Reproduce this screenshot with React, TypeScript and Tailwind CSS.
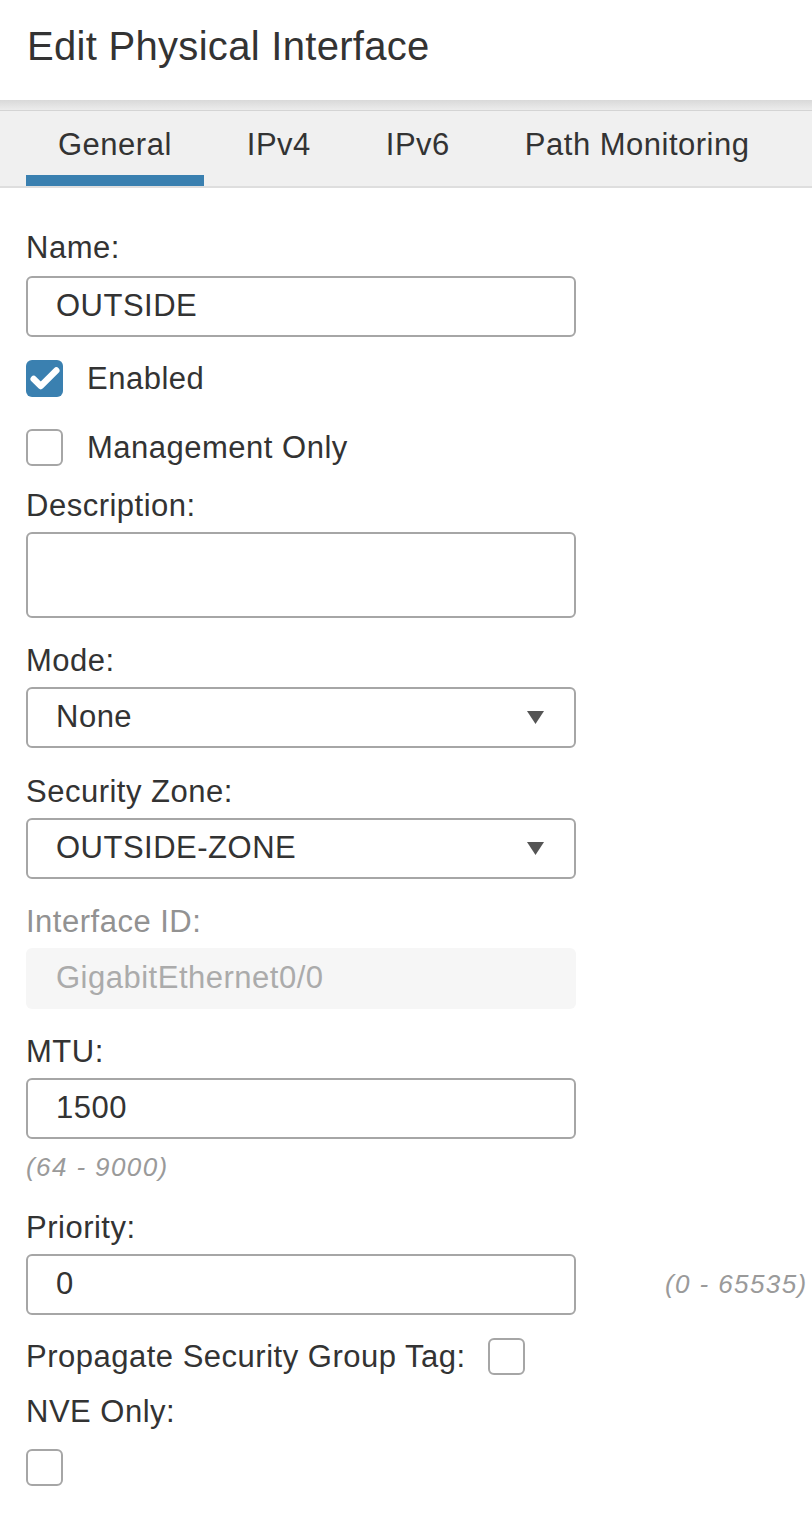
import { Check } from 'lucide-react';

const font = { fontFamily: '"Liberation Sans", Arial, sans-serif' };

function Label({ children, muted, first }: { children: React.ReactNode; muted?: boolean; first?: boolean }) {
    return (
        <div className={`h-9 leading-9 text-[31px] tracking-[0.5px] ${first ? 'mb-2.5' : 'mb-2'} ${muted ? 'text-[#929292]' : 'text-[#333]'}`}>
            {children}
        </div>
    );
}

function TextBox({ value, className = '' }: { value: string; className?: string }) {
    return (
        <div className={`w-[550px] h-[61px] shrink-0 border-2 border-[#a6a6a6] rounded-[6px] bg-white flex items-center pl-[28px] text-[31px] tracking-[0.5px] text-[#333] ${className}`}>
            {value}
        </div>
    );
}

function SelectBox({ value }: { value: string }) {
    return (
        <div className="w-[550px] h-[61px] border-2 border-[#a6a6a6] rounded-[6px] bg-white flex items-center justify-between pl-[28px] pr-[30px] text-[31px] tracking-[0.5px] text-[#333]">
            <span>{value}</span>
            <svg width="17" height="13" viewBox="0 0 17 13">
                <path d="M0 0 H17 L8.5 13 Z" fill="#555" />
            </svg>
        </div>
    );
}

function CheckBox({ checked }: { checked?: boolean }) {
    if (checked) {
        return (
            <div className="w-[37px] h-[37px] rounded-[6px] bg-[#3a80b0] flex items-center justify-center shrink-0">
                <Check className="w-[34px] h-[34px] text-white" strokeWidth={4.5} />
            </div>
        );
    }
    return <div className="w-[37px] h-[37px] rounded-[6px] border-2 border-[#a6a6a6] bg-white shrink-0" />;
}

const tabs = ['General', 'IPv4', 'IPv6', 'Path Monitoring'];

export default function App() {
    return (
        <div className="w-[812px] min-h-[1518px] bg-white" style={font}>
            {/* Header */}
            <div className="h-[100px] flex items-center px-[27px] pb-[8px]">
                <h1 className="text-[40px] tracking-[0.3px] text-[#333] font-normal leading-none">Edit Physical Interface</h1>
            </div>
            <div className="h-[11px] bg-gradient-to-b from-[#d9d9d9] to-[#ececec] border-b border-[#d4d4d4]" />

            {/* Tabs */}
            <div className="h-[77px] bg-[#f0f0f0] border-b-2 border-[#dedede] flex pl-[26px] gap-[11px]">
                {tabs.map((t, i) => (
                    <div key={t} className="relative px-[32px] flex items-center pb-[7px] text-[31px] tracking-[0.5px] text-[#333]">
                        {t}
                        {i === 0 && <div className="absolute left-0 right-0 bottom-0 h-[11px] bg-[#3a80b0]" />}
                    </div>
                ))}
            </div>

            {/* Form */}
            <div className="pl-[26px] pt-[42px]">
                <Label first>Name:</Label>
                <TextBox value="OUTSIDE" />

                <div className="flex items-center h-[37px] gap-[24px] mt-[23px]">
                    <CheckBox checked />
                    <span className="text-[31px] tracking-[0.5px] leading-none text-[#333]">Enabled</span>
                </div>
                <div className="flex items-center h-[37px] gap-[24px] mt-[32px]">
                    <CheckBox />
                    <span className="text-[31px] tracking-[0.5px] leading-none text-[#333]">Management Only</span>
                </div>

                <div className="mt-[22px]">
                    <Label>Description:</Label>
                    <div className="w-[550px] h-[86px] border-2 border-[#a6a6a6] rounded-[6px] bg-white" />
                </div>

                <div className="mt-[25px]">
                    <Label>Mode:</Label>
                    <SelectBox value="None" />
                </div>

                <div className="mt-[26px]">
                    <Label>Security Zone:</Label>
                    <SelectBox value="OUTSIDE-ZONE" />
                </div>

                <div className="mt-[25px]">
                    <Label muted>Interface ID:</Label>
                    <div className="w-[550px] h-[61px] rounded-[6px] bg-[#f6f6f6] flex items-center pl-[30px] text-[31px] tracking-[0.5px] text-[#ababab]">
                        GigabitEthernet0/0
                    </div>
                </div>

                <div className="mt-[25px]">
                    <Label>MTU:</Label>
                    <TextBox value="1500" />
                    <div className="mt-[13px] h-[30px] leading-[30px] text-[26px] tracking-[1.4px] italic text-[#9a9a9a]">(64 - 9000)</div>
                </div>

                <div className="mt-[28px]">
                    <Label>Priority:</Label>
                    <div className="flex items-center">
                        <TextBox value="0" />
                        <span className="ml-[89px] text-[26px] tracking-[1.4px] italic text-[#9a9a9a] whitespace-nowrap">(0 - 65535)</span>
                    </div>
                </div>

                <div className="flex items-center h-[37px] gap-[22px] mt-[23px]">
                    <span className="text-[31px] tracking-[0.5px] leading-none text-[#333]">Propagate Security Group Tag:</span>
                    <CheckBox />
                </div>

                <div className="mt-[19px]">
                    <Label>NVE Only:</Label>
                    <div className="pt-[11px]">
                        <CheckBox />
                    </div>
                </div>
            </div>
        </div>
    );
}
